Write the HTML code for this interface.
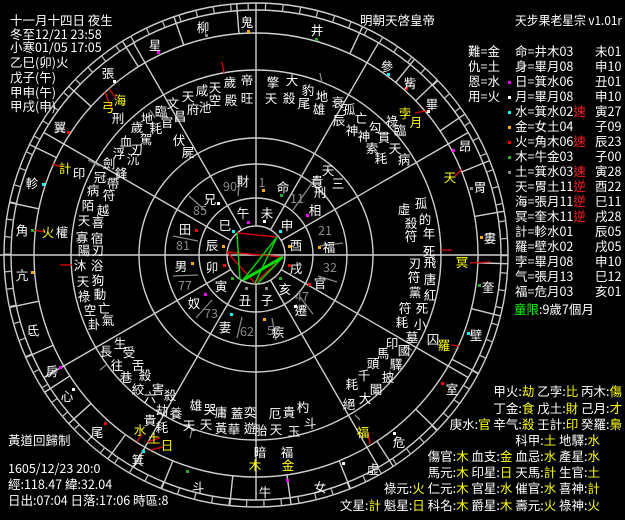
<!DOCTYPE html>
<html><head><meta charset="utf-8"><style>
html,body{margin:0;padding:0;background:#000;}
svg{display:block;}
text{font-family:"WenQuanYi Zen Hei","Noto Sans CJK TC","Liberation Sans",sans-serif;font-size:12.5px;fill:#fff;}
.c{text-anchor:middle;}
.g{fill:#8a8a8a;}
.y{fill:#ffff00;}
.r{fill:#ff2020;}
.gr{fill:#00ff00;}
.e{text-anchor:end;}
.l{stroke:#cfcfcf;stroke-width:1.4;fill:none;}
</style></head><body>
<svg width="625" height="520" viewBox="0 0 625 520" xmlns="http://www.w3.org/2000/svg">
<rect width="625" height="520" fill="#000"/>
<g class="l">
<circle cx="256" cy="255" r="252"/>
<circle cx="256" cy="255" r="245"/>
<circle cx="256" cy="255" r="248.5" stroke-width="7" stroke-dasharray="1.3 16.05" stroke="#bbb"/>
<circle cx="256" cy="255" r="222"/>
<circle cx="256" cy="255" r="185"/>
<circle cx="256" cy="255" r="117"/>
<circle cx="256" cy="255" r="91"/>
<circle cx="256" cy="255" r="57"/>
<circle cx="256" cy="255" r="29"/>
<line x1="0" y1="255" x2="508" y2="255"/>
<line x1="256" y1="3" x2="256" y2="226"/>
<line x1="256" y1="284" x2="256" y2="500"/>
</g>
<g class="l">
<line x1="285" y1="255" x2="501" y2="255" transform="rotate(-30 256 255)"/>
<line x1="285" y1="255" x2="501" y2="255" transform="rotate(-60 256 255)"/>
<line x1="285" y1="255" x2="501" y2="255" transform="rotate(-120 256 255)"/>
<line x1="285" y1="255" x2="501" y2="255" transform="rotate(-150 256 255)"/>
<line x1="285" y1="255" x2="501" y2="255" transform="rotate(-210 256 255)"/>
<line x1="285" y1="255" x2="501" y2="255" transform="rotate(-240 256 255)"/>
<line x1="285" y1="255" x2="501" y2="255" transform="rotate(-300 256 255)"/>
<line x1="285" y1="255" x2="501" y2="255" transform="rotate(-330 256 255)"/>
</g>
<g class="l">
<line x1="478" y1="255" x2="508" y2="255" transform="rotate(-94.4 256 255)"/>
<line x1="478" y1="255" x2="508" y2="255" transform="rotate(-109 256 255)"/>
<line x1="478" y1="255" x2="508" y2="255" transform="rotate(-122 256 255)"/>
<line x1="478" y1="255" x2="508" y2="255" transform="rotate(-138 256 255)"/>
<line x1="478" y1="255" x2="508" y2="255" transform="rotate(-154 256 255)"/>
<line x1="478" y1="255" x2="508" y2="255" transform="rotate(-168 256 255)"/>
<line x1="478" y1="255" x2="508" y2="255" transform="rotate(-192 256 255)"/>
<line x1="478" y1="255" x2="508" y2="255" transform="rotate(-204 256 255)"/>
<line x1="478" y1="255" x2="508" y2="255" transform="rotate(-213 256 255)"/>
<line x1="478" y1="255" x2="508" y2="255" transform="rotate(-222 256 255)"/>
<line x1="478" y1="255" x2="508" y2="255" transform="rotate(-234 256 255)"/>
<line x1="478" y1="255" x2="508" y2="255" transform="rotate(-248 256 255)"/>
<line x1="478" y1="255" x2="508" y2="255" transform="rotate(-264 256 255)"/>
<line x1="478" y1="255" x2="508" y2="255" transform="rotate(-278 256 255)"/>
<line x1="478" y1="255" x2="508" y2="255" transform="rotate(-292 256 255)"/>
<line x1="478" y1="255" x2="508" y2="255" transform="rotate(-303 256 255)"/>
<line x1="478" y1="255" x2="508" y2="255" transform="rotate(-316 256 255)"/>
<line x1="478" y1="255" x2="508" y2="255" transform="rotate(-332 256 255)"/>
<line x1="478" y1="255" x2="508" y2="255" transform="rotate(-346 256 255)"/>
<line x1="478" y1="255" x2="508" y2="255" transform="rotate(-358 256 255)"/>
<line x1="478" y1="255" x2="508" y2="255" transform="rotate(-10 256 255)"/>
<line x1="478" y1="255" x2="508" y2="255" transform="rotate(-22 256 255)"/>
<line x1="478" y1="255" x2="508" y2="255" transform="rotate(-34 256 255)"/>
<line x1="478" y1="255" x2="508" y2="255" transform="rotate(-44 256 255)"/>
<line x1="478" y1="255" x2="508" y2="255" transform="rotate(-51 256 255)"/>
<line x1="478" y1="255" x2="508" y2="255" transform="rotate(-65 256 255)"/>
</g>
<g stroke="#888" stroke-width="1.3">
<line x1="317" y1="176" x2="293" y2="210"/>
<line x1="343" y1="243" x2="320" y2="246"/>
<line x1="337" y1="282" x2="318" y2="276"/>
<line x1="313" y1="314" x2="300" y2="297"/>
<line x1="276" y1="340" x2="272" y2="318"/>
<line x1="237" y1="338" x2="242" y2="317"/>
<line x1="196" y1="318" x2="212" y2="300"/>
<line x1="173" y1="276" x2="198" y2="275"/>
<line x1="173" y1="236" x2="198" y2="241"/>
<line x1="189" y1="196" x2="206" y2="211"/>
<line x1="240" y1="176" x2="238" y2="196"/>
<line x1="150" y1="110" x2="155" y2="118"/>
<line x1="320" y1="73" x2="322" y2="83"/>
<line x1="88" y1="160" x2="100" y2="166"/>
<line x1="100" y1="370" x2="106" y2="365"/>
<line x1="192" y1="430" x2="190" y2="438"/>
<line x1="355" y1="415" x2="360" y2="420"/>
<line x1="405" y1="347" x2="412" y2="350"/>
</g>
<g stroke-width="1.5" fill="none">
<line x1="237" y1="233" x2="277" y2="237" stroke="#d00000"/>
<line x1="227" y1="252" x2="283" y2="257" stroke="#d00000"/>
<line x1="227" y1="252" x2="255" y2="283" stroke="#d00000"/>
<line x1="283" y1="257" x2="255" y2="283" stroke="#d00000"/>
<line x1="237" y1="233" x2="240" y2="280" stroke="#00d000"/>
<line x1="277" y1="237" x2="243" y2="280" stroke="#00d000"/>
<line x1="277" y1="237" x2="255" y2="283" stroke="#00d000"/>
<line x1="283" y1="257" x2="243" y2="280" stroke="#00e000" stroke-width="3"/>
<line x1="283" y1="257" x2="258" y2="283" stroke="#00d000"/>
</g>
<g stroke="#e00000" stroke-width="1.3">
<line x1="109" y1="89" x2="116" y2="98"/><line x1="105" y1="92" x2="112" y2="110"/>
<line x1="52" y1="164" x2="62" y2="167"/>
<line x1="33" y1="230" x2="45" y2="232"/>
<line x1="60" y1="265" x2="72" y2="265"/>
<line x1="415" y1="113" x2="430" y2="110"/>
<line x1="455" y1="176" x2="462" y2="169"/>
<line x1="470" y1="263" x2="490" y2="262"/>
<line x1="451" y1="345" x2="459" y2="346"/>
<line x1="441" y1="250" x2="452" y2="250"/>
<line x1="368" y1="432" x2="370" y2="444"/>
<line x1="137" y1="442" x2="142" y2="434"/><line x1="147" y1="442" x2="160" y2="438"/><line x1="150" y1="450" x2="163" y2="447"/>
<line x1="222" y1="62" x2="224" y2="73"/>
</g>
<g>
<rect x="157" y="51" width="3" height="3" fill="#f0f"/>
<rect x="205" y="34" width="3" height="3" fill="#888"/>
<rect x="247" y="30" width="3" height="3" fill="#fa0"/>
<rect x="315" y="38" width="3" height="3" fill="#2a2"/>
<rect x="113" y="80" width="3" height="3" fill="#fff"/>
<rect x="67" y="131" width="3" height="3" fill="#f00"/>
<rect x="42" y="183" width="3" height="3" fill="#0ff"/>
<rect x="31" y="229" width="3" height="3" fill="#2a2"/>
<rect x="31" y="271" width="3" height="3" fill="#fa0"/>
<rect x="59" y="366" width="3" height="3" fill="#f0f"/>
<rect x="72" y="388" width="3" height="3" fill="#fff"/>
<rect x="104" y="422" width="3" height="3" fill="#f00"/>
<rect x="142" y="450" width="3" height="3" fill="#0ff"/>
<rect x="387" y="73" width="3" height="3" fill="#0ff"/>
<rect x="405" y="87" width="3" height="3" fill="#f00"/>
<rect x="427" y="110" width="3" height="3" fill="#fff"/>
<rect x="452" y="149" width="3" height="3" fill="#f0f"/>
<rect x="470" y="187" width="3" height="3" fill="#888"/>
<rect x="480" y="236" width="3" height="3" fill="#fa0"/>
<rect x="478" y="284" width="3" height="3" fill="#2a2"/>
<rect x="467" y="332" width="3" height="3" fill="#0ff"/>
<rect x="441" y="382" width="3" height="3" fill="#f00"/>
<rect x="393" y="432" width="3" height="3" fill="#fff"/>
<rect x="342" y="462" width="3" height="3" fill="#fff"/>
<rect x="286" y="479" width="3" height="3" fill="#f0f"/>
<rect x="186" y="470" width="3" height="3" fill="#2a2"/>
<rect x="262" y="189" width="3" height="3" fill="#fa0"/>
<rect x="280" y="194" width="3" height="3" fill="#2a2"/>
<rect x="306" y="214" width="3" height="3" fill="#f0f"/>
<rect x="318" y="246" width="3" height="3" fill="#fa0"/>
<rect x="308" y="283" width="3" height="3" fill="#f00"/>
<rect x="294" y="305" width="3" height="3" fill="#fff"/>
<rect x="263" y="318" width="3" height="3" fill="#fa0"/>
<rect x="230" y="313" width="3" height="3" fill="#0ff"/>
<rect x="204" y="293" width="3" height="3" fill="#f0f"/>
<rect x="191" y="262" width="3" height="3" fill="#fa0"/>
<rect x="195" y="229" width="3" height="3" fill="#f00"/>
<rect x="217" y="202" width="3" height="3" fill="#fff"/>
<rect x="247" y="221" width="3" height="3" fill="#f0f"/>
<rect x="263" y="220" width="3" height="3" fill="#fff"/>
<rect x="232" y="230" width="3" height="3" fill="#0ff"/>
<rect x="279" y="230" width="3" height="3" fill="#0ff"/>
<rect x="222" y="245" width="3" height="3" fill="#fa0"/>
<rect x="288" y="245" width="3" height="3" fill="#fa0"/>
<rect x="223" y="264" width="3" height="3" fill="#f00"/>
<rect x="288" y="264" width="3" height="3" fill="#f00"/>
<rect x="231" y="277" width="3" height="3" fill="#2a2"/>
<rect x="279" y="277" width="3" height="3" fill="#2a2"/>
<rect x="245" y="287" width="3" height="3" fill="#888"/>
<rect x="265" y="287" width="3" height="3" fill="#888"/>
</g>
<g class="c">
<text x="155" y="50">星</text><text x="203" y="32">柳</text><text x="247" y="27">鬼</text><text x="317" y="35">井</text>
<text x="108" y="78">張</text><text x="60" y="132">翼</text><text x="32" y="188">軫</text><text x="22" y="235">角</text>
<text x="22" y="280">亢</text><text x="33" y="335">氐</text><text x="52" y="376">房</text><text x="67" y="401">心</text>
<text x="97" y="437">尾</text><text x="138" y="465">箕</text><text x="198" y="492">斗</text><text x="265" y="497">牛</text>
<text x="320" y="492">女</text><text x="373" y="474">虛</text><text x="399" y="447">危</text><text x="452" y="394">室</text>
<text x="476" y="340">壁</text><text x="488" y="292">奎</text><text x="490" y="243">婁</text><text x="480" y="192">胃</text>
<text x="465" y="151">昂</text><text x="432" y="109">畢</text><text x="410" y="88">觜</text><text x="387" y="71">參</text>
</g>
<g class="c y">
<text x="120" y="105" class="c y">海</text><text x="108" y="112" class="c y">弓</text>
<text x="65" y="173" class="c y">計</text><text x="48" y="237" class="c y">火</text>
<text x="405" y="118" class="c y">孛</text><text x="416" y="127" class="c y">月</text>
<text x="450" y="182" class="c y">天</text><text x="462" y="267" class="c y">冥</text>
<text x="444" y="350" class="c y">羅</text><text x="363" y="437" class="c y">福</text>
<text x="288" y="470" class="c y">金</text><text x="255" y="470" class="c y">木</text>
<text x="140" y="435" class="c y">水</text><text x="154" y="443" class="c y">土</text><text x="167" y="450" class="c y">日</text>
</g>
<g class="c">
<text x="118" y="123">刑</text><text x="79" y="178">印</text><text x="62" y="237">權</text>
<text x="188" y="101">天</text><text x="202" y="95">咸</text><text x="173" y="108">文</text><text x="205" y="112">池</text><text x="193" y="114">府</text>
<text x="161" y="116">臨</text><text x="180" y="121">昌</text><text x="167" y="127">官</text><text x="147" y="123">地</text><text x="137" y="132">歲</text>
<text x="156" y="133">耗</text><text x="146" y="144">駕</text><text x="179" y="145">伏</text><text x="126" y="146">血</text><text x="137" y="154">刃</text>
<text x="188" y="157">屍</text><text x="119" y="158">浮</text><text x="133" y="164">沉</text><text x="109" y="168">劍</text><text x="121" y="178">鋒</text>
<text x="100" y="182">冠</text><text x="113" y="188">帶</text><text x="93" y="195">病</text><text x="109" y="200">符</text><text x="88" y="210">陌</text>
<text x="103" y="215">越</text><text x="84" y="225">天</text><text x="98" y="227">喜</text><text x="82" y="242">寡</text><text x="97" y="243">宿</text>
<text x="84" y="255">陽</text><text x="98" y="255">刃</text>
<text x="215" y="92">天</text><text x="230" y="87">歲</text><text x="247" y="85">帝</text><text x="215" y="105">空</text><text x="231" y="105">殿</text><text x="247" y="103">旺</text>
<text x="273" y="87">擎</text><text x="292" y="85">大</text><text x="308" y="95">豹</text><text x="322" y="101">地</text>
<text x="271" y="103">天</text><text x="289" y="103">殺</text><text x="304" y="108">尾</text><text x="319" y="114">雄</text><text x="338" y="107">衰</text>
<text x="349" y="114">孤</text><text x="361" y="123">亡</text><text x="339" y="125">辰</text><text x="352" y="135">神</text><text x="375" y="132">勾</text>
<text x="392" y="126">祿</text><text x="364" y="141">神</text><text x="384" y="142">貫</text><text x="400" y="135">臨</text>
<text x="372" y="153">索</text><text x="395" y="153">天</text><text x="381" y="163">耗</text><text x="404" y="164">病</text>
<text x="328" y="175">天</text><text x="317" y="186">貴</text><text x="338" y="188">三</text><text x="320" y="197">刑</text>
<text x="421" y="208">孤</text><text x="404" y="214">虛</text><text x="425" y="224">的</text><text x="411" y="228">殺</text>
<text x="429" y="238">年</text><text x="411" y="241">符</text><text x="429" y="256">死</text>
<text x="415" y="268">刃</text><text x="430" y="267">飛</text><text x="414" y="282">符</text><text x="430" y="284">唐</text>
<text x="415" y="297">黨</text><text x="430" y="300">紅</text><text x="405" y="313">符</text><text x="422" y="313">死</text>
<text x="402" y="327">耗</text><text x="420" y="329">小</text><text x="412" y="342">墓</text><text x="433" y="344">囚</text>
<text x="392" y="348">印</text><text x="404" y="355">國</text><text x="383" y="358">馬</text><text x="396" y="369">驛</text>
<text x="373" y="368">頭</text><text x="388" y="382">披</text><text x="364" y="380">千</text><text x="376" y="394">闌</text>
<text x="352" y="389">耗</text><text x="365" y="403">大</text><text x="349" y="409">絕</text>
<text x="303" y="412">杓</text><text x="310" y="428">斗</text><text x="289" y="417">貴</text><text x="275" y="418">厄</text>
<text x="261" y="435">胎</text><text x="276" y="434">天</text><text x="294" y="436">玉</text>
<text x="287" y="457">福</text><text x="260" y="457">暗</text>
<text x="80" y="270">沐</text><text x="97" y="270">浴</text><text x="83" y="286">天</text><text x="98" y="285">狗</text>
<text x="84" y="301">祿</text><text x="100" y="299">動</text><text x="104" y="313">亡</text><text x="90" y="315">空</text>
<text x="108" y="325">氣</text><text x="94" y="329">卦</text>
<text x="120" y="348">生</text><text x="106" y="356">長</text><text x="129" y="357">受</text><text x="117" y="370">往</text>
<text x="138" y="370">舌</text><text x="126" y="382">巷</text><text x="145" y="380">殺</text><text x="138" y="394">絞</text>
<text x="158" y="394">害</text><text x="170" y="400">殺</text><text x="150" y="402">六</text><text x="162" y="415">劫</text>
<text x="150" y="425">貴</text><text x="162" y="432">耗</text>
<text x="176" y="418">養</text><text x="196" y="410">雄</text><text x="210" y="414">哭</text><text x="189" y="430">天</text>
<text x="206" y="429">天</text><text x="221" y="417">庸</text><text x="221" y="433">黃</text><text x="237" y="418">蓋</text>
<text x="234" y="434">華</text><text x="250" y="417">奕</text><text x="250" y="433">遊</text>
</g>
<g class="c">
<text x="243" y="186">財</text><text x="283" y="192">命</text><text x="210" y="204">兄</text><text x="315" y="215">相</text>
<text x="185" y="234">田</text><text x="329" y="252">福</text><text x="181" y="271">男</text><text x="320" y="288">官</text>
<text x="194" y="308">奴</text><text x="301" y="315">遷</text><text x="225" y="332">妻</text><text x="278" y="337">疾</text>
<text x="243" y="218">午</text><text x="267" y="218">未</text><text x="225" y="230">巳</text><text x="287" y="230">申</text>
<text x="212" y="250">辰</text><text x="296" y="250">酉</text><text x="212" y="272">卯</text><text x="296" y="273">戌</text>
<text x="221" y="291">寅</text><text x="285" y="294">亥</text><text x="245" y="305">丑</text><text x="267" y="305">子</text>
</g>
<g class="c g">
<text x="230" y="191" class="c g">90</text><text x="262" y="187" class="c g">1</text><text x="297" y="203" class="c g">11</text>
<text x="325" y="235" class="c g">21</text><text x="330" y="272" class="c g">32</text><text x="302" y="301" class="c g">47</text>
<text x="274" y="335" class="c g">55</text><text x="247" y="336" class="c g">62</text><text x="211" y="318" class="c g">73</text>
<text x="185" y="290" class="c g">77</text><text x="183" y="250" class="c g">81</text><text x="200" y="215" class="c g">85</text>
</g>
<g>
<text x="10" y="25">十一月十四日 夜生</text>
<text x="10" y="39">冬至12/21 23:58</text>
<text x="10" y="52">小寒01/05 17:05</text>
<text x="10" y="67">乙巳(卯)火</text>
<text x="10" y="82">戊子(午)</text>
<text x="10" y="97">甲申(午)</text>
<text x="10" y="111">甲戌(申)</text>
<text x="8" y="445">黃道回歸制</text>
<text x="8" y="473">1605/12/23 20:0</text>
<text x="8" y="489">經:118.47 緯:32.04</text>
<text x="8" y="505">日出:07:04 日落:17:06 時區:8</text>
</g>
<g>
<text x="360" y="25">明朝天啓皇帝</text>
<text x="515" y="25" textLength="107" lengthAdjust="spacingAndGlyphs">天步果老星宗 v1.01r</text>
<text x="468" y="56">難=金</text><text x="468" y="71">仇=土</text><text x="468" y="86">恩=水</text><text x="468" y="101">用=火</text>
</g>
<g class="y">
<text x="515" y="56">命=井木03</text>
<text x="515" y="71">身=畢月08</text>
<text x="515" y="86">日=箕水06</text>
<text x="515" y="101">月=畢月08</text>
<text x="515" y="116">水=箕水02<tspan class="r">速</tspan></text>
<text x="515" y="131">金=女土04</text>
<text x="515" y="146">火=角木06<tspan class="r">速</tspan></text>
<text x="515" y="161">木=牛金03</text>
<text x="515" y="176">土=箕水03<tspan class="r">速</tspan></text>
<text x="515" y="191">天=胃土11<tspan class="r">逆</tspan></text>
<text x="515" y="206">海=張月11<tspan class="r">逆</tspan></text>
<text x="515" y="221">冥=奎木11<tspan class="r">逆</tspan></text>
<text x="515" y="236">計=軫水01</text>
<text x="515" y="251">羅=壁水02</text>
<text x="515" y="266">孛=畢月08</text>
<text x="515" y="281">气=張月13</text>
<text x="515" y="296">福=危月03</text>
</g>
<g>
<rect x="508" y="81" width="3" height="3" fill="#f0f"/><rect x="508" y="96" width="3" height="3" fill="#fff"/>
<rect x="508" y="111" width="3" height="3" fill="#0ff"/><rect x="508" y="126" width="3" height="3" fill="#fa0"/>
<rect x="508" y="141" width="3" height="3" fill="#f00"/><rect x="508" y="156" width="3" height="3" fill="#2a2"/>
<rect x="508" y="171" width="3" height="3" fill="#888"/>
<text x="595" y="56">未01</text><text x="595" y="71">申10</text><text x="595" y="86">丑01</text><text x="595" y="101">申10</text>
<text x="595" y="116">寅27</text><text x="595" y="131">子09</text><text x="595" y="146">辰23</text><text x="595" y="161">子00</text>
<text x="595" y="176">寅28</text><text x="595" y="191">酉22</text><text x="595" y="206">巳11</text><text x="595" y="221">戌28</text>
<text x="595" y="236">辰05</text><text x="595" y="251">戌05</text><text x="595" y="266">申10</text><text x="595" y="281">巳12</text>
<text x="595" y="296">亥01</text>
<text x="514" y="314"><tspan class="gr">童限</tspan>:9歲7個月</text>
</g>
<g class="e">
<text x="622" y="396" class="e">甲火:<tspan class="y">劫</tspan> 乙孛:<tspan class="y">比</tspan> 丙木:<tspan class="y">傷</tspan></text>
<text x="622" y="413" class="e">丁金:<tspan class="y">食</tspan> 戊土:<tspan class="y">財</tspan> 己月:<tspan class="y">才</tspan></text>
<text x="622" y="429" class="e">庚水:<tspan class="y">官</tspan> 辛气:<tspan class="y">殺</tspan> 壬計:<tspan class="y">印</tspan> 癸羅:<tspan class="y">梟</tspan></text>
<text x="600" y="445" class="e">科甲:<tspan class="y">土</tspan> 地驛:<tspan class="y">水</tspan></text>
<text x="600" y="461" class="e">傷官:<tspan class="y">木</tspan> 血支:<tspan class="y">金</tspan> 血忌:<tspan class="y">水</tspan> 產星:<tspan class="y">水</tspan></text>
<text x="600" y="477" class="e">馬元:<tspan class="y">木</tspan> 印星:<tspan class="y">日</tspan> 天馬:<tspan class="y">計</tspan> 生官:<tspan class="y">土</tspan></text>
<text x="600" y="493" class="e">祿元:<tspan class="y">火</tspan> 仁元:<tspan class="y">木</tspan> 官星:<tspan class="y">水</tspan> 催官:<tspan class="y">水</tspan> 喜神:<tspan class="y">計</tspan></text>
<text x="600" y="510" class="e">文星:<tspan class="y">計</tspan> 魁星:<tspan class="y">日</tspan> 科名:<tspan class="y">木</tspan> 爵星:<tspan class="y">木</tspan> 壽元:<tspan class="y">火</tspan> 祿神:<tspan class="y">火</tspan></text>
</g>
</svg>
</body></html>
